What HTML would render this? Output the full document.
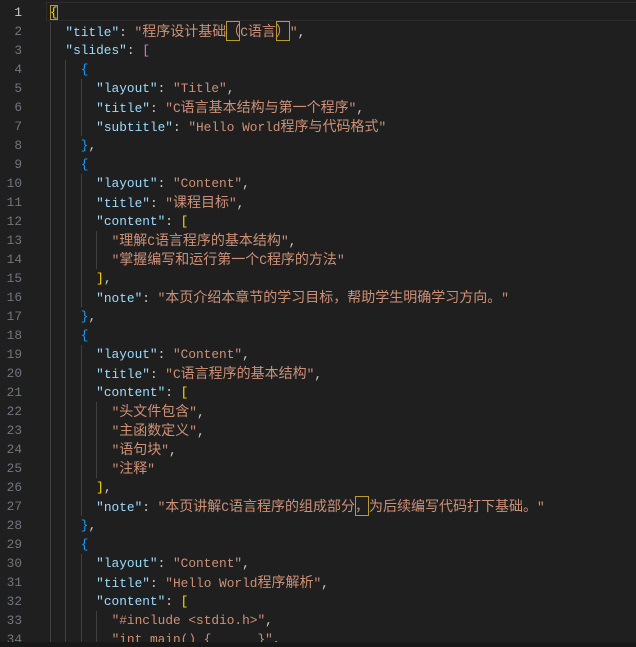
<!DOCTYPE html>
<html><head><meta charset="utf-8"><style>
html,body{margin:0;padding:0;background:#1f1f1f;width:636px;height:647px;overflow:hidden;}
#ed{position:absolute;left:0;top:0;width:636px;height:642px;overflow:hidden;font-family:"Liberation Mono",monospace;font-size:12.8px;color:#cccccc;}
.ln{position:absolute;left:0;width:22px;text-align:right;color:#6e7681;height:19px;line-height:19px;}
.l{position:absolute;left:50px;height:19px;line-height:19px;white-space:pre;}
.g{display:inline-block;width:15.4px;height:19px;vertical-align:top;box-shadow:inset 1px 0 #404040;}
.k{color:#9cdcfe}.s{color:#ce9178}
.y{color:#ffd700}.p{color:#da70d6}.b{color:#179fff}
b{font-weight:normal;font-family:"Noto Sans CJK SC",sans-serif;font-size:14px;}
.bx{outline:1px solid #b89c2c;outline-offset:-1px;}
#cur{position:absolute;left:46px;top:2px;width:590px;height:17px;border:1px solid #2c2c2c;}
#bot{position:absolute;left:0;top:642px;width:636px;height:5px;background:#181818;}
</style></head><body>
<div id="ed">
<div id="cur"></div>
<div class="ln" style="top:3px;color:#ccc">1</div>
<div class="ln" style="top:22px">2</div>
<div class="ln" style="top:41px">3</div>
<div class="ln" style="top:60px">4</div>
<div class="ln" style="top:79px">5</div>
<div class="ln" style="top:98px">6</div>
<div class="ln" style="top:117px">7</div>
<div class="ln" style="top:136px">8</div>
<div class="ln" style="top:155px">9</div>
<div class="ln" style="top:174px">10</div>
<div class="ln" style="top:193px">11</div>
<div class="ln" style="top:212px">12</div>
<div class="ln" style="top:231px">13</div>
<div class="ln" style="top:250px">14</div>
<div class="ln" style="top:269px">15</div>
<div class="ln" style="top:288px">16</div>
<div class="ln" style="top:307px">17</div>
<div class="ln" style="top:326px">18</div>
<div class="ln" style="top:345px">19</div>
<div class="ln" style="top:364px">20</div>
<div class="ln" style="top:383px">21</div>
<div class="ln" style="top:402px">22</div>
<div class="ln" style="top:421px">23</div>
<div class="ln" style="top:440px">24</div>
<div class="ln" style="top:459px">25</div>
<div class="ln" style="top:478px">26</div>
<div class="ln" style="top:497px">27</div>
<div class="ln" style="top:516px">28</div>
<div class="ln" style="top:535px">29</div>
<div class="ln" style="top:554px">30</div>
<div class="ln" style="top:573px">31</div>
<div class="ln" style="top:592px">32</div>
<div class="ln" style="top:611px">33</div>
<div class="ln" style="top:630px">34</div>

<div class="l" style="top:3px"><span class="y bx">{</span></div>
<div class="l" style="top:22px"><i class="g"></i><span class="k">"title"</span>: <span class="s">"<b>程序设计基础<span class="bx">（</span></b>C<b>语言<span class="bx">）</span></b>"</span>,</div>
<div class="l" style="top:41px"><i class="g"></i><span class="k">"slides"</span>: <span class="p">[</span></div>
<div class="l" style="top:60px"><i class="g"></i><i class="g"></i><span class="b">{</span></div>
<div class="l" style="top:79px"><i class="g"></i><i class="g"></i><i class="g"></i><span class="k">"layout"</span>: <span class="s">"Title"</span>,</div>
<div class="l" style="top:98px"><i class="g"></i><i class="g"></i><i class="g"></i><span class="k">"title"</span>: <span class="s">"C<b>语言基本结构与第一个程序</b>"</span>,</div>
<div class="l" style="top:117px"><i class="g"></i><i class="g"></i><i class="g"></i><span class="k">"subtitle"</span>: <span class="s">"Hello World<b>程序与代码格式</b>"</span></div>
<div class="l" style="top:136px"><i class="g"></i><i class="g"></i><span class="b">}</span>,</div>
<div class="l" style="top:155px"><i class="g"></i><i class="g"></i><span class="b">{</span></div>
<div class="l" style="top:174px"><i class="g"></i><i class="g"></i><i class="g"></i><span class="k">"layout"</span>: <span class="s">"Content"</span>,</div>
<div class="l" style="top:193px"><i class="g"></i><i class="g"></i><i class="g"></i><span class="k">"title"</span>: <span class="s">"<b>课程目标</b>"</span>,</div>
<div class="l" style="top:212px"><i class="g"></i><i class="g"></i><i class="g"></i><span class="k">"content"</span>: <span class="y">[</span></div>
<div class="l" style="top:231px"><i class="g"></i><i class="g"></i><i class="g"></i><i class="g"></i><span class="s">"<b>理解</b>C<b>语言程序的基本结构</b>"</span>,</div>
<div class="l" style="top:250px"><i class="g"></i><i class="g"></i><i class="g"></i><i class="g"></i><span class="s">"<b>掌握编写和运行第一个</b>C<b>程序的方法</b>"</span></div>
<div class="l" style="top:269px"><i class="g"></i><i class="g"></i><i class="g"></i><span class="y">]</span>,</div>
<div class="l" style="top:288px"><i class="g"></i><i class="g"></i><i class="g"></i><span class="k">"note"</span>: <span class="s">"<b>本页介绍本章节的学习目标，帮助学生明确学习方向。</b>"</span></div>
<div class="l" style="top:307px"><i class="g"></i><i class="g"></i><span class="b">}</span>,</div>
<div class="l" style="top:326px"><i class="g"></i><i class="g"></i><span class="b">{</span></div>
<div class="l" style="top:345px"><i class="g"></i><i class="g"></i><i class="g"></i><span class="k">"layout"</span>: <span class="s">"Content"</span>,</div>
<div class="l" style="top:364px"><i class="g"></i><i class="g"></i><i class="g"></i><span class="k">"title"</span>: <span class="s">"C<b>语言程序的基本结构</b>"</span>,</div>
<div class="l" style="top:383px"><i class="g"></i><i class="g"></i><i class="g"></i><span class="k">"content"</span>: <span class="y">[</span></div>
<div class="l" style="top:402px"><i class="g"></i><i class="g"></i><i class="g"></i><i class="g"></i><span class="s">"<b>头文件包含</b>"</span>,</div>
<div class="l" style="top:421px"><i class="g"></i><i class="g"></i><i class="g"></i><i class="g"></i><span class="s">"<b>主函数定义</b>"</span>,</div>
<div class="l" style="top:440px"><i class="g"></i><i class="g"></i><i class="g"></i><i class="g"></i><span class="s">"<b>语句块</b>"</span>,</div>
<div class="l" style="top:459px"><i class="g"></i><i class="g"></i><i class="g"></i><i class="g"></i><span class="s">"<b>注释</b>"</span></div>
<div class="l" style="top:478px"><i class="g"></i><i class="g"></i><i class="g"></i><span class="y">]</span>,</div>
<div class="l" style="top:497px"><i class="g"></i><i class="g"></i><i class="g"></i><span class="k">"note"</span>: <span class="s">"<b>本页讲解</b>C<b>语言程序的组成部分<span class="bx">，</span>为后续编写代码打下基础。</b>"</span></div>
<div class="l" style="top:516px"><i class="g"></i><i class="g"></i><span class="b">}</span>,</div>
<div class="l" style="top:535px"><i class="g"></i><i class="g"></i><span class="b">{</span></div>
<div class="l" style="top:554px"><i class="g"></i><i class="g"></i><i class="g"></i><span class="k">"layout"</span>: <span class="s">"Content"</span>,</div>
<div class="l" style="top:573px"><i class="g"></i><i class="g"></i><i class="g"></i><span class="k">"title"</span>: <span class="s">"Hello World<b>程序解析</b>"</span>,</div>
<div class="l" style="top:592px"><i class="g"></i><i class="g"></i><i class="g"></i><span class="k">"content"</span>: <span class="y">[</span></div>
<div class="l" style="top:611px"><i class="g"></i><i class="g"></i><i class="g"></i><i class="g"></i><span class="s">"#include &lt;stdio.h&gt;"</span>,</div>
<div class="l" style="top:630px"><i class="g"></i><i class="g"></i><i class="g"></i><i class="g"></i><span class="s">"int main() {      }"</span>,</div>
</div>
<div id="bot"></div>
</body></html>
